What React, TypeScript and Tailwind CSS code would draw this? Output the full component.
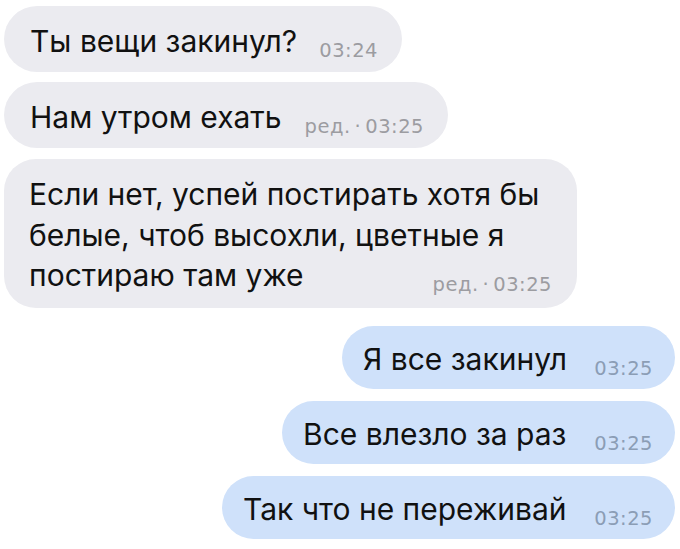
import React from "react";

const font = { fontFamily: "Inter, Roboto, 'Noto Sans', sans-serif" };
const timeFont = { fontFamily: "'DejaVu Sans', Inter, sans-serif" };

function Time({ time, edited, blue }: { time: string; edited?: boolean; blue?: boolean }) {
  return (
    <span
      style={timeFont}
      className={
        "flex items-baseline text-[19.5px] leading-none tracking-[0.5px] translate-y-[5px] whitespace-nowrap " +
        (blue ? "text-[#8b9db5]" : "text-[#9c9ca1]")
      }
    >
      {edited && (
        <>
          <span>ред.</span>
          <span className="mx-[4px]">·</span>
        </>
      )}
      <span>{time}</span>
    </span>
  );
}

function Bubble({
  text,
  time,
  edited,
  blue,
  w,
}: {
  text: string;
  time: string;
  edited?: boolean;
  blue?: boolean;
  w: string;
}) {
  return (
    <div
      className={
        "flex items-center rounded-full pt-[4px] " +
        w +
        (blue
          ? " h-[63px] self-end bg-[#cfe1fa] pl-[21px] pr-[22px]"
          : " h-[66px] self-start bg-[#ebebf0] pl-[26px] pr-[24px]")
      }
    >
      <div className="flex w-full items-baseline justify-between">
        <span className="text-[30px] leading-[41px] text-[#111111] whitespace-nowrap">{text}</span>
        <Time time={time} edited={edited} blue={blue} />
      </div>
    </div>
  );
}

export default function App() {
  return (
    <div className="h-[549px] w-[680px] overflow-hidden bg-white" style={font}>
      <div className="flex flex-col pl-[4px] pr-[5px] pt-[6px]">
        <Bubble w="w-[398px]" text="Ты вещи закинул?" time="03:24" />
        <div className="mt-[10px]" />
        <Bubble w="w-[444px]" text="Нам утром ехать" time="03:25" edited />
        <div className="mt-[11px] w-[573px] self-start rounded-[32px] bg-[#ebebf0] pb-[12px] pl-[25px] pr-[25px] pt-[15px]">
          <div className="text-[30px] leading-[40.5px] text-[#111111]">
            <div className="whitespace-nowrap">Если нет, успей постирать хотя бы</div>
            <div className="whitespace-nowrap">белые, чтоб высохли, цветные я</div>
            <div className="flex items-baseline justify-between">
              <span>постираю там уже</span>
              <Time time="03:25" edited />
            </div>
          </div>
        </div>
        <div className="mt-[18px]" />
        <Bubble w="w-[333px]" blue text="Я все закинул" time="03:25" />
        <div className="mt-[12px]" />
        <Bubble w="w-[393px]" blue text="Все влезло за раз" time="03:25" />
        <div className="mt-[12px]" />
        <Bubble w="w-[453px]" blue text="Так что не переживай" time="03:25" />
      </div>
    </div>
  );
}
